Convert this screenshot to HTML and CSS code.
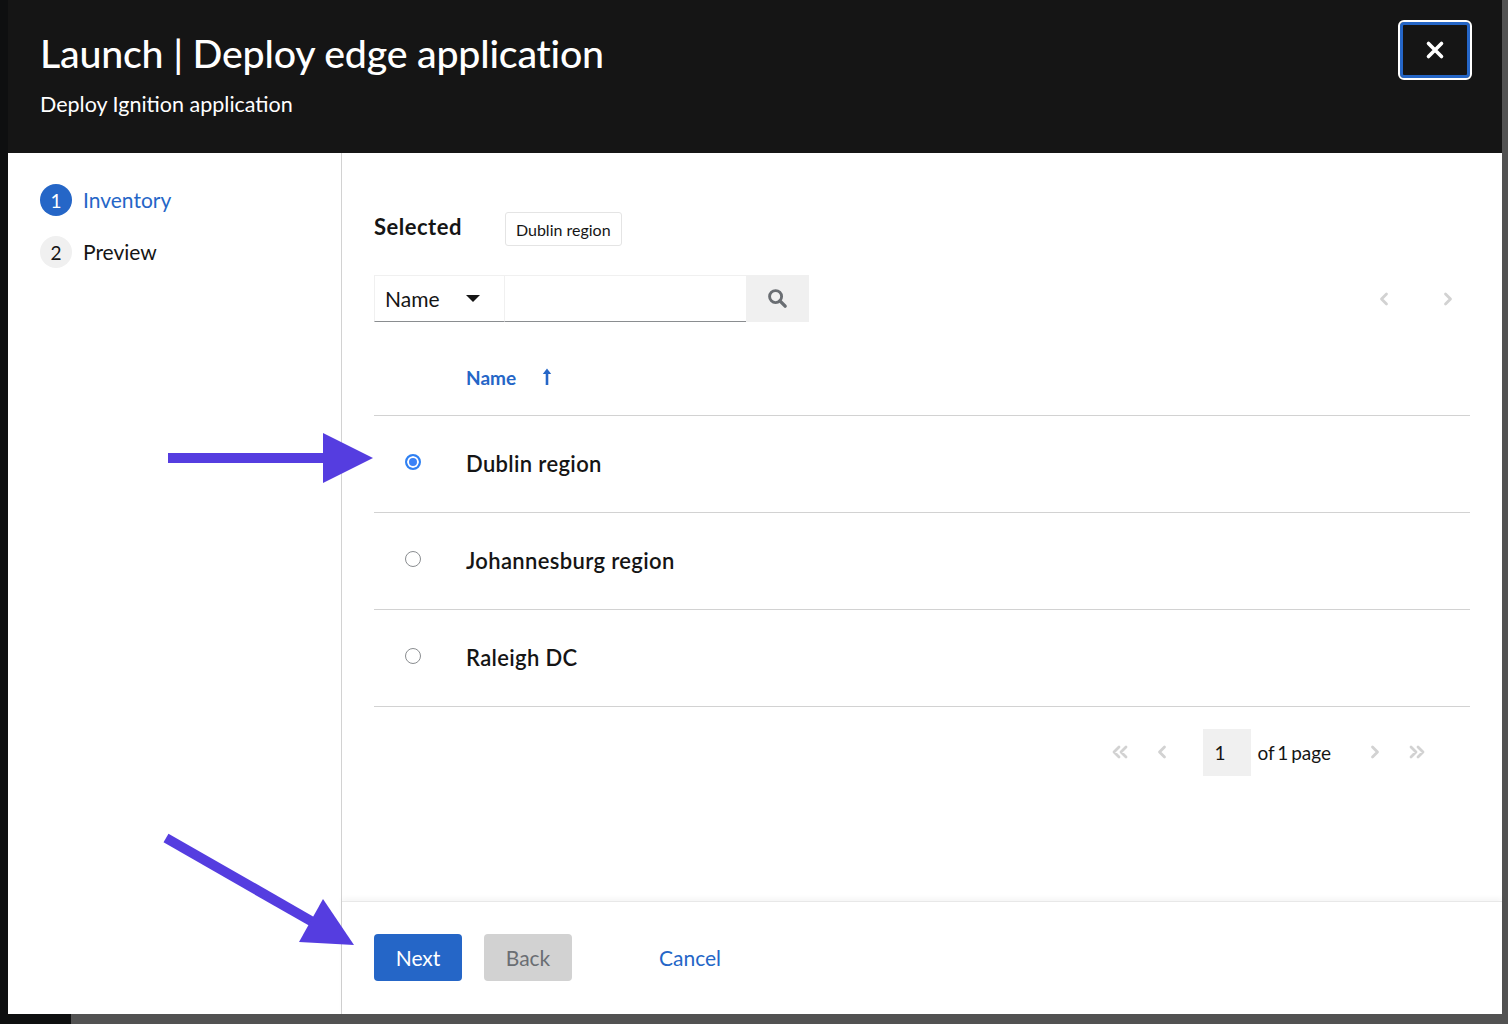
FILE: index.html
```html
<!DOCTYPE html>
<html lang="en">
<head>
<meta charset="utf-8">
<title>Launch | Deploy edge application</title>
<link rel="stylesheet" href="styles.css">
</head>
<body>
<div class="modal">
  <header class="modal-header">
    <div class="titles">
      <h1 class="modal-title">Launch | Deploy edge application</h1>
      <p class="modal-subtitle">Deploy Ignition application</p>
    </div>
    <button class="close-btn" aria-label="Close">
      <svg viewBox="0 0 20 20" width="20" height="20"><path d="M3.5 3.5 L16.5 16.5 M16.5 3.5 L3.5 16.5" stroke="#fff" stroke-width="3.6" stroke-linecap="round"/></svg>
    </button>
  </header>
  <div class="wizard">
    <nav class="steps">
      <ol class="step-list">
        <li class="step current"><span class="step-num">1</span><span class="step-label">Inventory</span></li>
        <li class="step"><span class="step-num">2</span><span class="step-label">Preview</span></li>
      </ol>
    </nav>
    <div class="main">
      <div class="content">
        <div class="selected-row">
          <span class="selected-label">Selected</span>
          <span class="chip">Dublin region</span>
        </div>
        <div class="toolbar">
          <div class="search-group">
            <div class="select">
              <span>Name</span>
              <svg class="caret" viewBox="0 0 14 8" width="14" height="8"><path d="M0 0 H14 L7 7 Z" fill="#151515"/></svg>
            </div>
            <div class="search-input"></div>
            <button class="search-btn" aria-label="Search">
              <svg viewBox="0 0 22 22" width="21" height="21"><circle cx="9" cy="9" r="6.3" fill="none" stroke="#6a6e73" stroke-width="3"/><path d="M13.5 13.5 L19 19" stroke="#6a6e73" stroke-width="3.6" stroke-linecap="round"/></svg>
            </button>
          </div>
          <div class="mini-pager">
            <button class="pg-btn" aria-label="Previous"><svg viewBox="0 0 12 14" width="12" height="14"><path d="M8.5 2 L3.5 7 L8.5 12" fill="none" stroke="#d2d2d2" stroke-width="2.8" stroke-linecap="round" stroke-linejoin="round"/></svg></button>
            <button class="pg-btn" aria-label="Next"><svg viewBox="0 0 12 14" width="12" height="14"><path d="M3.5 2 L8.5 7 L3.5 12" fill="none" stroke="#d2d2d2" stroke-width="2.8" stroke-linecap="round" stroke-linejoin="round"/></svg></button>
          </div>
        </div>
        <table class="table">
          <thead>
            <tr>
              <th class="col-radio"></th>
              <th class="col-name"><span class="sort">Name<svg class="sort-icon" viewBox="0 0 10 18" width="10" height="18"><path d="M5 17 V4" stroke="#2566c7" stroke-width="2.6"/><path d="M0.8 6 L5 0.5 L9.2 6 Z" fill="#2566c7"/></svg></span></th>
            </tr>
          </thead>
          <tbody>
            <tr>
              <td class="col-radio"><span class="radio checked"></span></td>
              <td class="col-name">Dublin region</td>
            </tr>
            <tr>
              <td class="col-radio"><span class="radio"></span></td>
              <td class="col-name">Johannesburg region</td>
            </tr>
            <tr>
              <td class="col-radio"><span class="radio"></span></td>
              <td class="col-name">Raleigh DC</td>
            </tr>
          </tbody>
        </table>
        <div class="pager">
          <button class="pg-btn" aria-label="First"><svg viewBox="0 0 20 14" width="20" height="14"><path d="M9 2 L4 7 L9 12 M16 2 L11 7 L16 12" fill="none" stroke="#d2d2d2" stroke-width="2.8" stroke-linecap="round" stroke-linejoin="round"/></svg></button>
          <button class="pg-btn" aria-label="Previous"><svg viewBox="0 0 12 14" width="12" height="14"><path d="M8.5 2 L3.5 7 L8.5 12" fill="none" stroke="#d2d2d2" stroke-width="2.8" stroke-linecap="round" stroke-linejoin="round"/></svg></button>
          <span class="page-input">1</span>
          <span class="page-of">of 1 page</span>
          <button class="pg-btn" aria-label="Next"><svg viewBox="0 0 12 14" width="12" height="14"><path d="M3.5 2 L8.5 7 L3.5 12" fill="none" stroke="#d2d2d2" stroke-width="2.8" stroke-linecap="round" stroke-linejoin="round"/></svg></button>
          <button class="pg-btn" aria-label="Last"><svg viewBox="0 0 20 14" width="20" height="14"><path d="M4 2 L9 7 L4 12 M11 2 L16 7 L11 12" fill="none" stroke="#d2d2d2" stroke-width="2.8" stroke-linecap="round" stroke-linejoin="round"/></svg></button>
        </div>
      </div>
      <footer class="footer">
        <button class="btn btn-primary">Next</button>
        <button class="btn btn-disabled">Back</button>
        <button class="btn btn-link">Cancel</button>
      </footer>
    </div>
  </div>
</div>
<svg class="annotations" viewBox="0 0 1508 1024" width="1508" height="1024" aria-hidden="true">
  <rect x="168" y="453" width="160" height="10" fill="#553de0"/>
  <polygon points="323,433 373,458 323,483" fill="#553de0"/>
  <line x1="166" y1="838" x2="318" y2="925" stroke="#553de0" stroke-width="10"/>
  <polygon points="323,899 354,945 299,942" fill="#553de0"/>
</svg>
</body>
</html>
```

FILE: styles.css
```css
* { box-sizing: border-box; }

html, body { margin: 0; padding: 0; }

body {
  width: 1508px;
  height: 1024px;
  overflow: hidden;
  position: relative;
  font-family: "Lato", "Liberation Sans", sans-serif;
  color: #151515;
  background:
    linear-gradient(#0e0f10, #0e0f10) 0 1014px / 71px 10px no-repeat,
    linear-gradient(#0e0f10, #0e0f10) 0 0 / 8px 1024px no-repeat,
    linear-gradient(#1f1f1f, #1f1f1f) 0 392px / 8px 48px no-repeat,
    #525252;
}

.modal {
  margin-left: 8px;
  width: 1494px;
  height: 1014px;
  background: #fff;
  display: flex;
  flex-direction: column;
}

/* header */
.modal-header {
  height: 153px;
  flex: none;
  background: #151515;
  color: #fff;
  display: flex;
  justify-content: space-between;
  align-items: flex-start;
  padding: 0 30px 0 32px;
}

.titles { padding-top: 29px; }

.modal-title {
  margin: 0;
  font-size: 39.3px;
  font-weight: 500;
  line-height: 48px;
  letter-spacing: -0.2px;
}

.modal-subtitle {
  margin: 13px 0 0;
  font-size: 21.5px;
  line-height: 28px;
}

.close-btn {
  margin-top: 20px;
  width: 74px;
  height: 60px;
  background: #151515;
  border: 2px solid #fff;
  border-radius: 6px;
  box-shadow: inset 0 0 0 3px #2566c7;
  display: flex;
  align-items: center;
  justify-content: center;
  padding: 0;
}

/* wizard body */
.wizard {
  flex: 1;
  display: flex;
  min-height: 0;
}

.steps {
  width: 334px;
  flex: none;
  border-right: 1px solid #d2d2d2;
  padding: 31px 32px 0 32px;
}

.step-list { list-style: none; margin: 0; padding: 0; }

.step {
  display: flex;
  align-items: center;
  gap: 11px;
  height: 32px;
  margin-bottom: 20px;
  font-size: 21px;
}

.step-label { margin-top: -1px; }

.step-num {
  width: 32px;
  height: 32px;
  border-radius: 50%;
  background: #f0f0f0;
  display: flex;
  align-items: center;
  justify-content: center;
  font-size: 19px;
  color: #151515;
}

.step.current .step-num { background: #2566c7; color: #fff; }
.step.current .step-label { color: #2566c7; }

.main {
  flex: 1;
  display: flex;
  flex-direction: column;
  min-width: 0;
}

.content {
  flex: 1;
  padding: 59px 32px 0 32px;
}

.selected-row {
  display: flex;
  align-items: center;
  gap: 43px;
  height: 34px;
}

.selected-label {
  font-size: 22px;
  font-weight: 700;
  letter-spacing: 0.5px;
  margin-top: -5px;
}

.chip {
  height: 34px;
  display: flex;
  align-items: center;
  padding: 0 10px;
  border: 1px solid #e4e4e4;
  border-radius: 3px;
  font-size: 16px;
}

/* toolbar */
.toolbar {
  margin-top: 29px;
  display: flex;
  justify-content: space-between;
  align-items: center;
}

.search-group {
  display: flex;
  height: 47px;
}

.select {
  width: 131px;
  display: flex;
  align-items: center;
  justify-content: space-between;
  padding: 0 24px 0 10px;
  font-size: 21px;
  border-top: 1px solid #f0f0f0;
  border-left: 1px solid #f0f0f0;
  border-right: 1px solid #f0f0f0;
  border-bottom: 1px solid #8a8d90;
}

.search-input {
  width: 241px;
  border-top: 1px solid #f0f0f0;
  border-bottom: 1px solid #8a8d90;
}

.search-btn {
  width: 63px;
  border: 0;
  background: #f0f0f0;
  display: flex;
  align-items: center;
  justify-content: center;
  padding: 0;
}

.mini-pager {
  display: flex;
  gap: 20px;
}

.pg-btn {
  width: 44px;
  height: 44px;
  border: 0;
  background: transparent;
  padding: 0;
  display: flex;
  align-items: center;
  justify-content: center;
}

/* table */
.table {
  margin-top: 19px;
  width: 100%;
  border-collapse: collapse;
}

.table th {
  height: 74px;
  text-align: left;
  font-size: 19px;
  font-weight: 700;
  color: #2566c7;
  border-bottom: 1px solid #d2d2d2;
  padding: 0;
}

.table td {
  height: 97px;
  border-bottom: 1px solid #d2d2d2;
  font-size: 22px;
  font-weight: 600;
  letter-spacing: 0.35px;
  padding: 0;
}

.col-radio { width: 92px; }
.table td.col-radio { padding-left: 31px; text-align: left; }

.sort { display: inline-flex; align-items: center; gap: 26px; }
.sort-icon { margin-top: -2px; }

.radio {
  display: inline-block;
  width: 16px;
  height: 16px;
  border-radius: 50%;
  border: 1px solid #8a8d90;
  background: #fff;
  vertical-align: middle;
  margin-top: -8px;
}

.radio.checked {
  border: 2px solid #2f80f2;
  background: #3b82f6;
  box-shadow: inset 0 0 0 2px #fff;
}

/* bottom pager */
.pager {
  margin-top: 22px;
  display: flex;
  justify-content: flex-end;
  align-items: center;
  padding-right: 32px;
}

.pager .pg-btn { width: 42px; }
.pager .pg-btn + .page-input { margin-left: 20px; }

.page-input {
  width: 48px;
  height: 47px;
  background: #f0f0f0;
  display: flex;
  align-items: center;
  padding-left: 12px;
  font-size: 19px;
}

.page-of {
  margin-left: 7px;
  margin-right: 23px;
  font-size: 19px;
  word-spacing: -2px;
}

/* footer */
.footer {
  height: 113px;
  flex: none;
  border-top: 1px solid #e8e8e8;
  box-shadow: 0 -3px 5px rgba(0, 0, 0, 0.04);
  padding: 32px 32px 0 32px;
  display: flex;
  align-items: flex-start;
  gap: 22px;
}

.btn {
  height: 47px;
  border: 0;
  border-radius: 4px;
  font-family: inherit;
  font-size: 21px;
  padding: 0 21px;
}

.btn-primary { background: #2566c7; color: #fff; width: 88px; }
.btn-disabled { background: #d2d2d2; color: #6a6e73; width: 88px; }
.btn-link { background: transparent; color: #2566c7; margin-left: 44px; }

/* annotations overlay */
.annotations {
  position: absolute;
  top: 0;
  left: 0;
  pointer-events: none;
}
```
